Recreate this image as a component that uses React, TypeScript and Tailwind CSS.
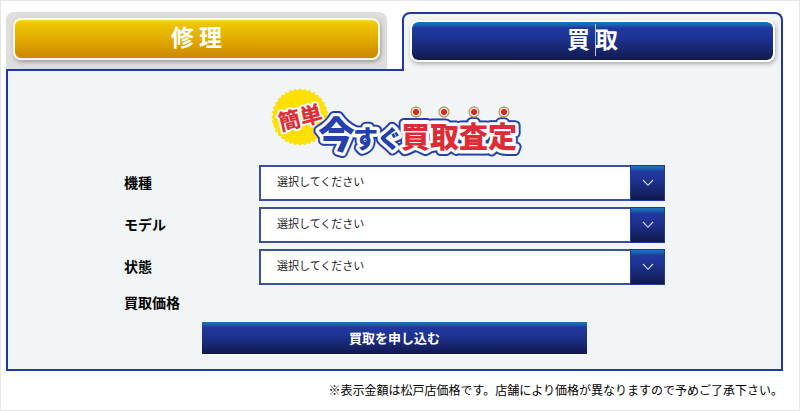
import React from "react";

const cjk = "font-['Noto_Sans_CJK_JP',sans-serif]";
const navy =
  "bg-[linear-gradient(to_bottom,#1478c0_0%,#1a62b0_8%,#2038a0_16%,#1e3494_40%,#14205e_85%,#10184a_100%)]";

function Burst() {
  const cx = 29;
  const cy = 29;
  const teeth = 36;
  const points = Array.from({ length: teeth * 2 }, (_, i) => {
    const r = i % 2 === 0 ? 28.8 : 26.8;
    const a = (Math.PI * i) / teeth;
    return `${(cx + r * Math.cos(a)).toFixed(2)},${(cy + r * Math.sin(a)).toFixed(2)}`;
  }).join(" ");
  return <polygon points={points} fill="#ffe000" />;
}

function LogoWords() {
  return (
    <>
      <text x="47" y="61" fontSize="37">今</text>
      <text x="82" y="60" fontSize="25">す</text>
      <text x="106" y="60" fontSize="25">ぐ</text>
      <text x="130" y="60" fontSize="29" className="fill-[var(--accent)]">買取査定</text>
    </>
  );
}

function Logo() {
  return (
    <svg
      width="248"
      height="72"
      viewBox="0 0 248 72"
      role="img"
      aria-label="簡単 今すぐ買取査定"
      className={`${cjk} mx-auto block overflow-visible font-bold`}
    >
      <Burst />
      <g transform="rotate(-14 29 29)" fontSize="22" textAnchor="middle" strokeLinejoin="round">
        <text x="29" y="38" fill="#fff" stroke="#fff" strokeWidth="4">簡単</text>
        <text x="29" y="38" fill="#dd2c36" stroke="#dd2c36" strokeWidth="0.3">簡単</text>
      </g>
      <g fill="#2340ac" stroke="#2340ac" strokeWidth="11" strokeLinejoin="round" className="[--accent:#2340ac]">
        <LogoWords />
      </g>
      <g fill="#fff" stroke="#fff" strokeWidth="7" strokeLinejoin="round" className="[--accent:#fff]">
        <LogoWords />
      </g>
      <g fill="#2340ac" className="font-black [--accent:#dd2c36]">
        <LogoWords />
      </g>
      {[145, 173, 203, 233].map((x) => (
        <g key={x}>
          <circle cx={x} cy="24" r="5" fill="#fff" stroke="#c09a50" strokeWidth="1.3" />
          <circle cx={x} cy="24" r="3" fill="#e01f26" />
        </g>
      ))}
    </svg>
  );
}

function Field({ id, label }: { id: string; label: string }) {
  return (
    <div className="flex items-center">
      <label htmlFor={id} className="w-[135px] shrink-0 pb-[2px] text-[14px] font-bold">
        {label}
      </label>
      <div className="relative flex-1">
        <select
          id={id}
          className="block h-9 w-full appearance-none rounded-none border-2 border-[#3c50a0] bg-white pb-[3px] pl-4 pr-10 text-[11px] text-[#222]"
        >
          <option>選択してください</option>
        </select>
        <span
          className={`${navy} pointer-events-none absolute inset-y-0 right-0 flex w-[35px] items-center justify-center border border-[#2038a0]`}
        >
          <svg width="12" height="8" viewBox="0 0 12 8" fill="none" stroke="#d4dcf6" strokeWidth="1.1">
            <path d="M1 1 L6 6.3 L11 1" />
          </svg>
        </span>
      </div>
    </div>
  );
}

export default function App() {
  return (
    <div className={`${cjk} border border-[#e6e6e6] bg-white pb-[10px] pl-[5px] pr-4 pt-[11px] text-black`}>
      <div className="grid grid-cols-2 items-start gap-[15px]">
        <div className="h-[57px] rounded-t-lg bg-[#dedede] px-[7px] pt-[6px]">
          <button
            type="button"
            className="h-[42px] w-full rounded-lg border-2 border-[#fffbe6] bg-[linear-gradient(to_bottom,#fbe23c_0%,#ecc400_15%,#e0a800_55%,#c88400_100%)] bg-origin-border pb-[5px] text-[23px] leading-none font-bold text-white shadow-[1px_2px_4px_#0000004d]"
          >
            修 理
          </button>
        </div>
        <div className="relative z-10 -mb-[2px] h-[59px] rounded-t-lg border-2 border-b-0 border-[#2038a0] bg-[#f1f5f8] px-[6px] pt-[6px]">
          <button
            type="button"
            className={`${navy} relative h-[42px] w-full rounded-lg border-2 border-white bg-clip-padding pb-[5px] text-[23px] leading-none font-bold text-white shadow-[1px_2px_4px_#0000004d]`}
          >
            買 取
            <span className="absolute left-1/2 top-[2px] ml-0.5 h-8 w-px bg-[#b9c4ea]" />
          </button>
        </div>
      </div>

      <main className="border-2 border-[#2038a0] bg-[#f1f5f8] pb-[15px] pt-[17px]">
        <h1>
          <Logo />
        </h1>
        <form className="mx-auto mt-[5px] flex max-w-[541px] flex-col gap-[6px]">
          <Field id="kind" label="機種" />
          <Field id="model" label="モデル" />
          <Field id="state" label="状態" />
          <p className="h-[25px] text-[14px] leading-[22px] font-bold">買取価格</p>
          <button
            type="button"
            className={`${navy} mx-auto h-8 w-full max-w-[385px] text-[13px] font-bold text-white shadow-[0_1px_2px_#ffffff]`}
          >
            買取を申し込む
          </button>
        </form>
      </main>
      <p className="mt-[9px] text-right text-[12px] leading-5">
        ※表示金額は松戸店価格です。店舗により価格が異なりますので予めご了承下さい。
      </p>
    </div>
  );
}
